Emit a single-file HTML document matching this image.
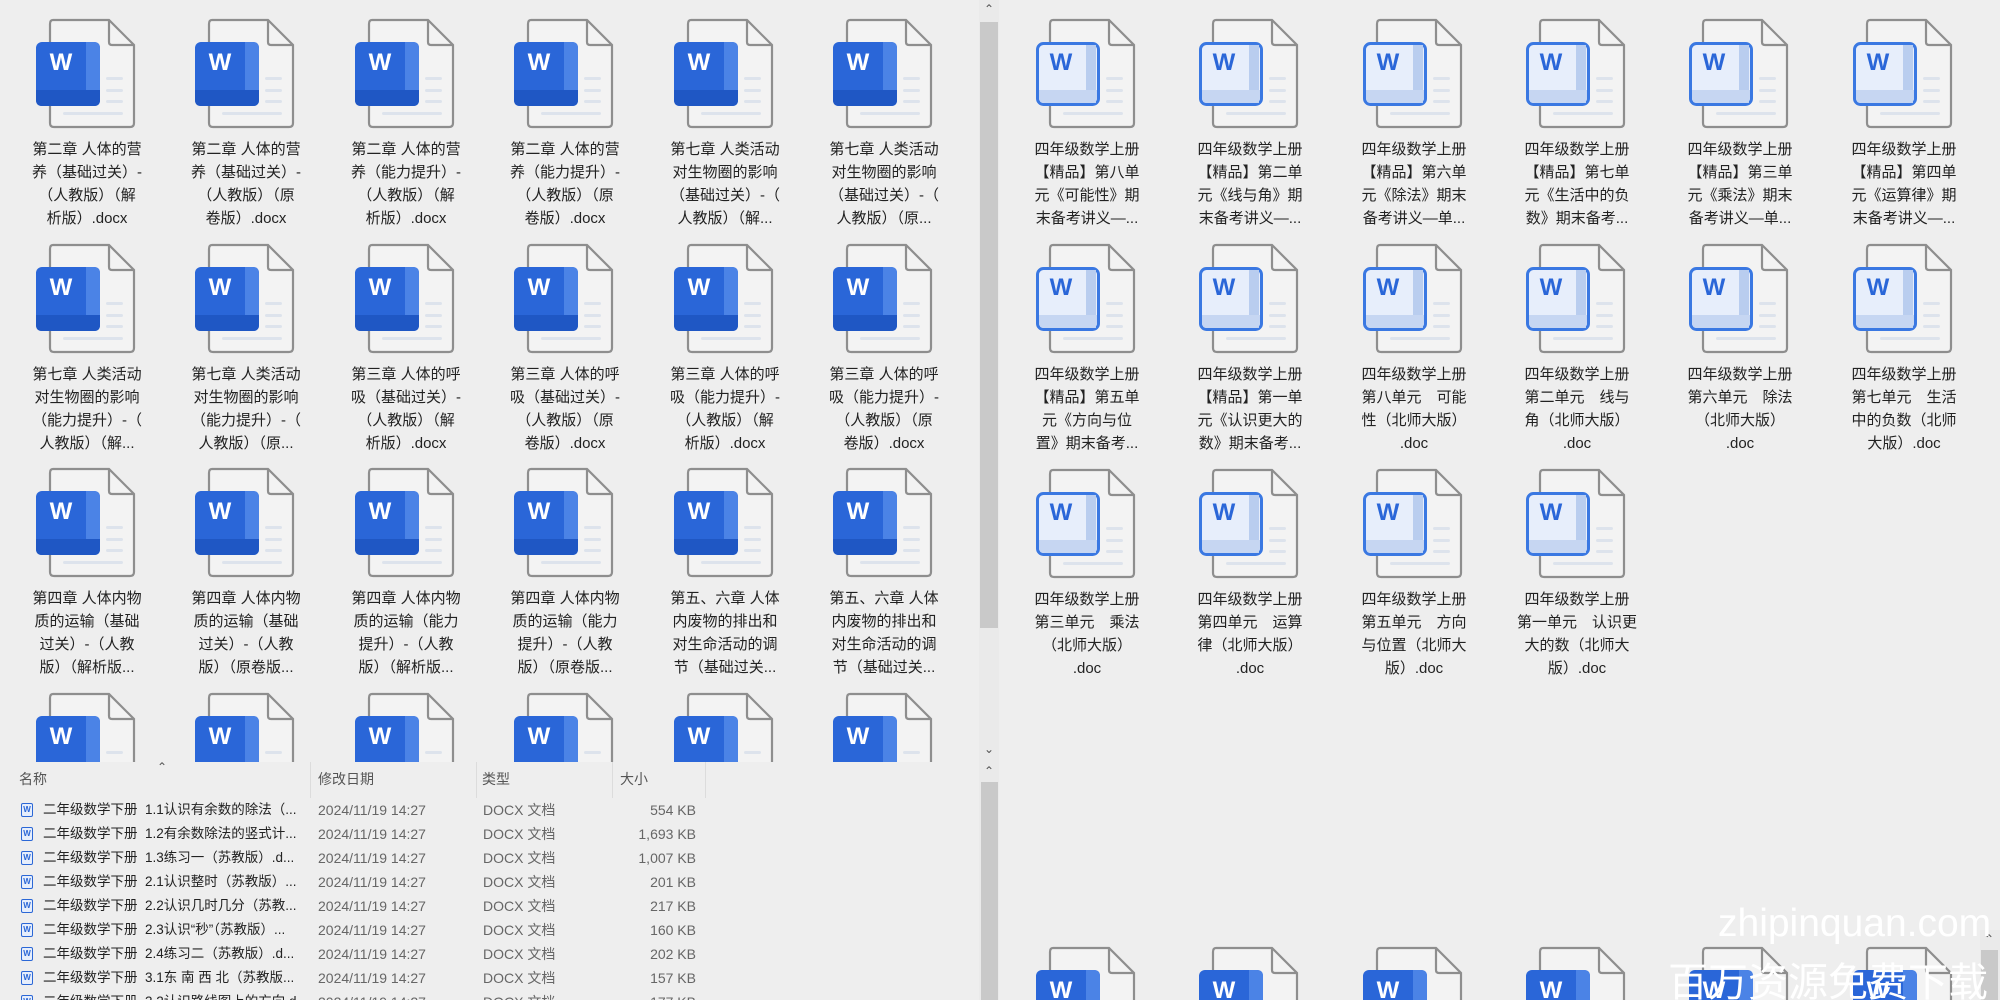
<!DOCTYPE html>
<html><head><meta charset="utf-8"><style>
*{margin:0;padding:0;box-sizing:border-box}
html,body{width:2000px;height:1000px;overflow:hidden}
body{background:#eeeeee;font-family:"Liberation Sans","Noto Sans CJK SC",sans-serif;color:#222}
#root{position:relative;width:2000px;height:1000px;overflow:hidden;background:#eeeeee}
.it{position:absolute;width:100px;height:112px}
.it svg{position:absolute;left:0;top:0}
.lb{position:absolute;left:-19px;top:120px;width:140px;text-align:center;font-size:15px;line-height:23px;white-space:nowrap;color:#222}
#list{position:absolute;left:0;top:762px;width:979px;height:238px;background:#eeeeee;overflow:hidden}
.h{position:absolute;top:7px;font-size:14px;color:#555}
.sep{position:absolute;top:0;width:1px;height:36px;background:#dcdcdc}
.r{position:absolute;left:0;height:24px;width:979px;font-size:14px;line-height:24px}
.r span{position:absolute;top:0;white-space:nowrap}
.r .n{left:43px;color:#222;font-size:13.5px}
.r .d{left:318px;color:#666}
.r .t{left:483px;color:#666}
.r .s{left:0;width:696px;text-align:right;color:#666}
.ri{position:absolute;left:21px;top:5px;width:12px;height:14px;border:1.5px solid #2b67d6;border-radius:2px;background:#e6eefc;font-size:8px;line-height:11px;text-align:center;color:#2b67d6;font-weight:bold}
.sb{position:absolute;background:#eaeaea}
.th{position:absolute;background:#c9c9c9}
.ar{position:absolute;font-size:12px;color:#555;width:20px;text-align:center}
.wm{position:absolute;color:#fff;white-space:nowrap;font-family:"Liberation Sans","Noto Sans CJK SC",sans-serif}
</style></head><body><div id="root">
<svg width="0" height="0" style="position:absolute">
<defs>
<g id="pg">
<path d="M17 2 H73 L98 27 V105 Q98 109 94 109 H18 Q14 109 14 105 V6 Q14 2 17 2 Z" fill="#f3f3f3" stroke="#8e8e8e" stroke-width="2.2"/>
<path d="M73 2 V24 Q73 27 76 27 H98" fill="none" stroke="#8e8e8e" stroke-width="2.2"/>
<rect x="70" y="59" width="17" height="3" rx="1.5" fill="#dde3ec"/>
<rect x="70" y="71" width="17" height="3" rx="1.5" fill="#dde3ec"/>
<rect x="70" y="82" width="17" height="3" rx="1.5" fill="#dde3ec"/>
<rect x="27" y="94" width="60" height="3" rx="1.5" fill="#dde3ec"/>
</g>
<g id="wf">
<use href="#pg"/>
<rect x="0" y="24" width="64" height="64" rx="6" fill="#2a66d8"/>
<path d="M50 24 H58 Q64 24 64 30 V82 Q64 88 58 88 H50 Z" fill="#4b83e6"/>
<path d="M0 72 H64 V82 Q64 88 58 88 H6 Q0 88 0 82 Z" fill="#1f57c4"/>
<text x="25" y="52" text-anchor="middle" font-family="Liberation Sans,sans-serif" font-weight="bold" font-size="24" fill="#fff">W</text>
</g>
<g id="wo">
<use href="#pg"/>
<rect x="1.5" y="25.5" width="61" height="61" rx="6" fill="#e7eefb" stroke="#3a78e2" stroke-width="3"/>
<path d="M50 27 H60 V85 H50 Z" fill="#b9cdef"/>
<path d="M3 72 H61 V80 Q61 85 56 85 H8 Q3 85 3 80 Z" fill="#c6d6f2"/>
<text x="25" y="52" text-anchor="middle" font-family="Liberation Sans,sans-serif" font-weight="bold" font-size="24" fill="#2a66d8">W</text>
</g>
</defs></svg>

<div class="it" style="left:36px;top:18px"><svg width="100" height="112"><use href="#wf"/></svg><div class="lb">第二章 人体的营<br>养（基础过关）-<br>（人教版）（解<br>析版）.docx</div></div>
<div class="it" style="left:195px;top:18px"><svg width="100" height="112"><use href="#wf"/></svg><div class="lb">第二章 人体的营<br>养（基础过关）-<br>（人教版）（原<br>卷版）.docx</div></div>
<div class="it" style="left:355px;top:18px"><svg width="100" height="112"><use href="#wf"/></svg><div class="lb">第二章 人体的营<br>养（能力提升）-<br>（人教版）（解<br>析版）.docx</div></div>
<div class="it" style="left:514px;top:18px"><svg width="100" height="112"><use href="#wf"/></svg><div class="lb">第二章 人体的营<br>养（能力提升）-<br>（人教版）（原<br>卷版）.docx</div></div>
<div class="it" style="left:674px;top:18px"><svg width="100" height="112"><use href="#wf"/></svg><div class="lb">第七章 人类活动<br>对生物圈的影响<br>（基础过关）-（<br>人教版）（解...</div></div>
<div class="it" style="left:833px;top:18px"><svg width="100" height="112"><use href="#wf"/></svg><div class="lb">第七章 人类活动<br>对生物圈的影响<br>（基础过关）-（<br>人教版）（原...</div></div>

<div class="it" style="left:36px;top:243px"><svg width="100" height="112"><use href="#wf"/></svg><div class="lb">第七章 人类活动<br>对生物圈的影响<br>（能力提升）-（<br>人教版）（解...</div></div>
<div class="it" style="left:195px;top:243px"><svg width="100" height="112"><use href="#wf"/></svg><div class="lb">第七章 人类活动<br>对生物圈的影响<br>（能力提升）-（<br>人教版）（原...</div></div>
<div class="it" style="left:355px;top:243px"><svg width="100" height="112"><use href="#wf"/></svg><div class="lb">第三章 人体的呼<br>吸（基础过关）-<br>（人教版）（解<br>析版）.docx</div></div>
<div class="it" style="left:514px;top:243px"><svg width="100" height="112"><use href="#wf"/></svg><div class="lb">第三章 人体的呼<br>吸（基础过关）-<br>（人教版）（原<br>卷版）.docx</div></div>
<div class="it" style="left:674px;top:243px"><svg width="100" height="112"><use href="#wf"/></svg><div class="lb">第三章 人体的呼<br>吸（能力提升）-<br>（人教版）（解<br>析版）.docx</div></div>
<div class="it" style="left:833px;top:243px"><svg width="100" height="112"><use href="#wf"/></svg><div class="lb">第三章 人体的呼<br>吸（能力提升）-<br>（人教版）（原<br>卷版）.docx</div></div>

<div class="it" style="left:36px;top:467px"><svg width="100" height="112"><use href="#wf"/></svg><div class="lb">第四章 人体内物<br>质的运输（基础<br>过关）-（人教<br>版）（解析版...</div></div>
<div class="it" style="left:195px;top:467px"><svg width="100" height="112"><use href="#wf"/></svg><div class="lb">第四章 人体内物<br>质的运输（基础<br>过关）-（人教<br>版）（原卷版...</div></div>
<div class="it" style="left:355px;top:467px"><svg width="100" height="112"><use href="#wf"/></svg><div class="lb">第四章 人体内物<br>质的运输（能力<br>提升）-（人教<br>版）（解析版...</div></div>
<div class="it" style="left:514px;top:467px"><svg width="100" height="112"><use href="#wf"/></svg><div class="lb">第四章 人体内物<br>质的运输（能力<br>提升）-（人教<br>版）（原卷版...</div></div>
<div class="it" style="left:674px;top:467px"><svg width="100" height="112"><use href="#wf"/></svg><div class="lb">第五、六章 人体<br>内废物的排出和<br>对生命活动的调<br>节（基础过关...</div></div>
<div class="it" style="left:833px;top:467px"><svg width="100" height="112"><use href="#wf"/></svg><div class="lb">第五、六章 人体<br>内废物的排出和<br>对生命活动的调<br>节（基础过关...</div></div>

<div class="it" style="left:36px;top:692px"><svg width="100" height="112"><use href="#wf"/></svg></div>
<div class="it" style="left:195px;top:692px"><svg width="100" height="112"><use href="#wf"/></svg></div>
<div class="it" style="left:355px;top:692px"><svg width="100" height="112"><use href="#wf"/></svg></div>
<div class="it" style="left:514px;top:692px"><svg width="100" height="112"><use href="#wf"/></svg></div>
<div class="it" style="left:674px;top:692px"><svg width="100" height="112"><use href="#wf"/></svg></div>
<div class="it" style="left:833px;top:692px"><svg width="100" height="112"><use href="#wf"/></svg></div>

<div class="sb" style="left:979px;top:0;width:20px;height:762px"></div>
<div class="th" style="left:980px;top:22px;width:18px;height:606px"></div>
<div class="ar" style="left:979px;top:2px">&#8963;</div>
<div class="ar" style="left:979px;top:742px">&#8964;</div>

<div id="list">
<div class="ar" style="left:152px;top:-2px">&#8963;</div>
<div class="h" style="left:19px">名称</div>
<div class="h" style="left:318px">修改日期</div>
<div class="h" style="left:482px">类型</div>
<div class="h" style="left:620px">大小</div>
<div class="sep" style="left:310px"></div><div class="sep" style="left:476px"></div><div class="sep" style="left:612px"></div><div class="sep" style="left:705px"></div>
<div class="r" style="top:36px"><div class="ri">W</div><span class="n">二年级数学下册&nbsp; 1.1认识有余数的除法（...</span><span class="d">2024/11/19 14:27</span><span class="t">DOCX 文档</span><span class="s">554 KB</span></div>
<div class="r" style="top:60px"><div class="ri">W</div><span class="n">二年级数学下册&nbsp; 1.2有余数除法的竖式计...</span><span class="d">2024/11/19 14:27</span><span class="t">DOCX 文档</span><span class="s">1,693 KB</span></div>
<div class="r" style="top:84px"><div class="ri">W</div><span class="n">二年级数学下册&nbsp; 1.3练习一（苏教版）.d...</span><span class="d">2024/11/19 14:27</span><span class="t">DOCX 文档</span><span class="s">1,007 KB</span></div>
<div class="r" style="top:108px"><div class="ri">W</div><span class="n">二年级数学下册&nbsp; 2.1认识整时（苏教版）...</span><span class="d">2024/11/19 14:27</span><span class="t">DOCX 文档</span><span class="s">201 KB</span></div>
<div class="r" style="top:132px"><div class="ri">W</div><span class="n">二年级数学下册&nbsp; 2.2认识几时几分（苏教...</span><span class="d">2024/11/19 14:27</span><span class="t">DOCX 文档</span><span class="s">217 KB</span></div>
<div class="r" style="top:156px"><div class="ri">W</div><span class="n">二年级数学下册&nbsp; 2.3认识“秒”（苏教版）...</span><span class="d">2024/11/19 14:27</span><span class="t">DOCX 文档</span><span class="s">160 KB</span></div>
<div class="r" style="top:180px"><div class="ri">W</div><span class="n">二年级数学下册&nbsp; 2.4练习二（苏教版）.d...</span><span class="d">2024/11/19 14:27</span><span class="t">DOCX 文档</span><span class="s">202 KB</span></div>
<div class="r" style="top:204px"><div class="ri">W</div><span class="n">二年级数学下册&nbsp; 3.1东 南 西 北（苏教版...</span><span class="d">2024/11/19 14:27</span><span class="t">DOCX 文档</span><span class="s">157 KB</span></div>
<div class="r" style="top:228px"><div class="ri">W</div><span class="n">二年级数学下册&nbsp; 3.2认识路线图上的方向.d...</span><span class="d">2024/11/19 14:27</span><span class="t">DOCX 文档</span><span class="s">177 KB</span></div>
</div>
<div class="sb" style="left:979px;top:762px;width:20px;height:238px"></div>
<div class="th" style="left:981px;top:782px;width:17px;height:218px"></div>
<div class="ar" style="left:979px;top:764px">&#8963;</div>

<div class="it" style="left:1036px;top:18px"><svg width="100" height="112"><use href="#wo"/></svg><div class="lb">四年级数学上册<br>【精品】第八单<br>元《可能性》期<br>末备考讲义—...</div></div>
<div class="it" style="left:1199px;top:18px"><svg width="100" height="112"><use href="#wo"/></svg><div class="lb">四年级数学上册<br>【精品】第二单<br>元《线与角》期<br>末备考讲义—...</div></div>
<div class="it" style="left:1363px;top:18px"><svg width="100" height="112"><use href="#wo"/></svg><div class="lb">四年级数学上册<br>【精品】第六单<br>元《除法》期末<br>备考讲义—单...</div></div>
<div class="it" style="left:1526px;top:18px"><svg width="100" height="112"><use href="#wo"/></svg><div class="lb">四年级数学上册<br>【精品】第七单<br>元《生活中的负<br>数》期末备考...</div></div>
<div class="it" style="left:1689px;top:18px"><svg width="100" height="112"><use href="#wo"/></svg><div class="lb">四年级数学上册<br>【精品】第三单<br>元《乘法》期末<br>备考讲义—单...</div></div>
<div class="it" style="left:1853px;top:18px"><svg width="100" height="112"><use href="#wo"/></svg><div class="lb">四年级数学上册<br>【精品】第四单<br>元《运算律》期<br>末备考讲义—...</div></div>

<div class="it" style="left:1036px;top:243px"><svg width="100" height="112"><use href="#wo"/></svg><div class="lb">四年级数学上册<br>【精品】第五单<br>元《方向与位<br>置》期末备考...</div></div>
<div class="it" style="left:1199px;top:243px"><svg width="100" height="112"><use href="#wo"/></svg><div class="lb">四年级数学上册<br>【精品】第一单<br>元《认识更大的<br>数》期末备考...</div></div>
<div class="it" style="left:1363px;top:243px"><svg width="100" height="112"><use href="#wo"/></svg><div class="lb">四年级数学上册<br>第八单元　可能<br>性（北师大版）<br>.doc</div></div>
<div class="it" style="left:1526px;top:243px"><svg width="100" height="112"><use href="#wo"/></svg><div class="lb">四年级数学上册<br>第二单元　线与<br>角（北师大版）<br>.doc</div></div>
<div class="it" style="left:1689px;top:243px"><svg width="100" height="112"><use href="#wo"/></svg><div class="lb">四年级数学上册<br>第六单元　除法<br>（北师大版）<br>.doc</div></div>
<div class="it" style="left:1853px;top:243px"><svg width="100" height="112"><use href="#wo"/></svg><div class="lb">四年级数学上册<br>第七单元　生活<br>中的负数（北师<br>大版）.doc</div></div>

<div class="it" style="left:1036px;top:468px"><svg width="100" height="112"><use href="#wo"/></svg><div class="lb">四年级数学上册<br>第三单元　乘法<br>（北师大版）<br>.doc</div></div>
<div class="it" style="left:1199px;top:468px"><svg width="100" height="112"><use href="#wo"/></svg><div class="lb">四年级数学上册<br>第四单元　运算<br>律（北师大版）<br>.doc</div></div>
<div class="it" style="left:1363px;top:468px"><svg width="100" height="112"><use href="#wo"/></svg><div class="lb">四年级数学上册<br>第五单元　方向<br>与位置（北师大<br>版）.doc</div></div>
<div class="it" style="left:1526px;top:468px"><svg width="100" height="112"><use href="#wo"/></svg><div class="lb">四年级数学上册<br>第一单元　认识更<br>大的数（北师大<br>版）.doc</div></div>

<div class="it" style="left:1036px;top:946px"><svg width="100" height="112"><use href="#wf"/></svg></div>
<div class="it" style="left:1199px;top:946px"><svg width="100" height="112"><use href="#wf"/></svg></div>
<div class="it" style="left:1363px;top:946px"><svg width="100" height="112"><use href="#wf"/></svg></div>
<div class="it" style="left:1526px;top:946px"><svg width="100" height="112"><use href="#wf"/></svg></div>
<div class="it" style="left:1689px;top:946px"><svg width="100" height="112"><use href="#wf"/></svg></div>
<div class="it" style="left:1853px;top:946px"><svg width="100" height="112"><use href="#wf"/></svg></div>

<div class="sb" style="left:1980px;top:930px;width:20px;height:70px"></div>
<div class="th" style="left:1981px;top:950px;width:17px;height:50px"></div>
<div class="ar" style="left:1979px;top:932px">&#8963;</div>

<div class="wm" style="left:1718px;top:902px;font-size:39px">zhipinquan.com</div>
<div class="wm" style="left:1668px;top:950px;font-size:40px">百万资源免费下载</div>
</div></body></html>
